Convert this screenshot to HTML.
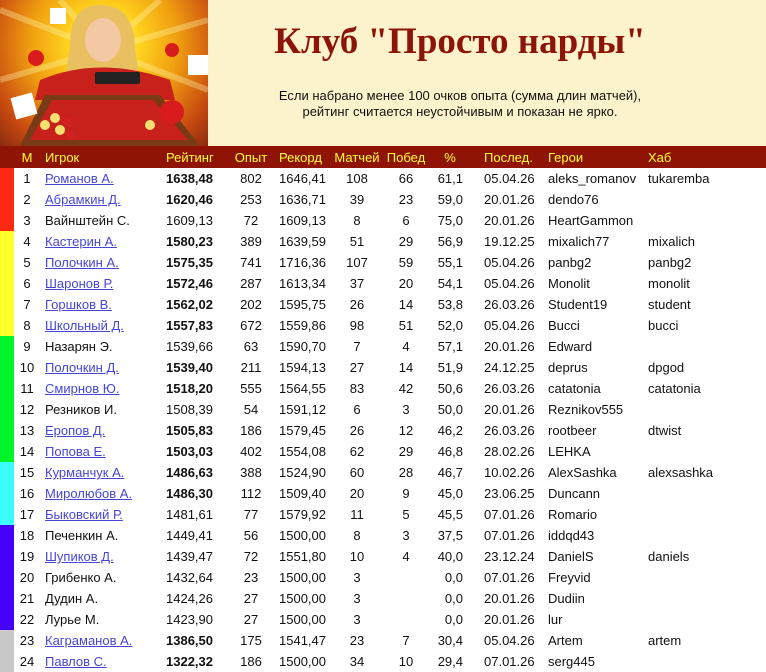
<!DOCTYPE html>
<html><head><meta charset="utf-8"><style>
*{margin:0;padding:0;box-sizing:border-box}
body{width:766px;height:671px;overflow:hidden;background:#fff;font-family:"Liberation Sans",Arial,sans-serif;font-size:13px;color:#111}
#top{position:absolute;left:0;top:0;width:766px;height:146px;background:#fcf2cc}
#img{position:absolute;left:0;top:0;width:208px;height:146px;overflow:hidden;
background:radial-gradient(circle at 50% 30%,#fff6a0 0,#ffd21e 25%,#f0a010 50%,#c84a10 80%,#8a2a10 100%)}
#title{position:absolute;left:230px;top:20px;width:460px;text-align:center;font-family:"Liberation Serif",serif;font-weight:bold;font-size:37px;color:#8c1408}
#sub{position:absolute;left:230px;top:88px;width:460px;text-align:center;font-size:13px;line-height:16px;color:#111}
table{position:absolute;left:0;top:146px;border-collapse:collapse;table-layout:fixed;width:766px}
td,th{height:21px;white-space:nowrap;padding:0;font-weight:normal;overflow:hidden}
tr.h th{background:#8f1405;color:#ffff3a;height:22px;text-align:left}
.s{width:14px}
.m{width:26px;text-align:center!important}
.n{width:120px;padding-left:5px}
.r{width:70px;padding-left:6px}
.o{width:42px;text-align:center!important}
.k{width:60px;padding-left:7px}
.c{width:50px;text-align:center!important}
.w{width:48px;text-align:center!important}
.p{width:40px;text-align:right!important;padding-right:7px}
.d{width:72px;padding-left:14px}
.g{width:100px;padding-left:6px}
.x{padding-left:6px}
a{color:#4646d6;text-decoration:underline}
b{font-weight:bold}
</style></head><body>
<div id="top">
<div id="img">
<svg width="208" height="146" viewBox="0 0 208 146">
<g opacity=".35" stroke="#fff8b0" stroke-width="6"><line x1="104" y1="50" x2="0" y2="10"/><line x1="104" y1="50" x2="0" y2="80"/><line x1="104" y1="50" x2="208" y2="20"/><line x1="104" y1="50" x2="208" y2="90"/><line x1="104" y1="50" x2="60" y2="0"/><line x1="104" y1="50" x2="160" y2="0"/></g>
<path d="M70 45 Q70 5 100 5 Q135 5 135 50 L140 80 L65 80Z" fill="#e8c060"/>
<ellipse cx="103" cy="40" rx="18" ry="22" fill="#f3c9a4"/>
<path d="M40 80 Q100 55 170 80 L175 100 L35 100Z" fill="#c8201a"/>
<rect x="95" y="72" width="45" height="12" fill="#222" rx="2"/>
<path d="M20 146 L45 95 L160 95 L200 146Z" fill="#7a3a16"/>
<path d="M30 140 L52 100 L153 100 L188 140Z" fill="#c8201a"/>
<g fill="#f4e070"><circle cx="45" cy="125" r="5"/><circle cx="55" cy="118" r="5"/><circle cx="60" cy="130" r="5"/><circle cx="150" cy="125" r="5"/></g>
<g fill="#d02020"><circle cx="68" cy="122" r="5"/><circle cx="70" cy="135" r="5"/></g>
<g fill="#fff"><rect x="13" y="95" width="22" height="22" transform="rotate(-15 24 106)"/><rect x="50" y="8" width="16" height="16"/><rect x="188" y="55" width="20" height="20"/></g>
<circle cx="172" cy="112" r="12" fill="#d81c1c"/><circle cx="36" cy="58" r="8" fill="#d81c1c"/><circle cx="172" cy="50" r="7" fill="#d81c1c"/>
</svg>
</div>
<div id="title">Клуб "Просто нарды"</div>
<div id="sub">Если набрано менее 100 очков опыта (сумма длин матчей),<br>рейтинг считается неустойчивым и показан не ярко.</div>
</div>
<table>
<tr class="h"><th class="s"></th><th class="m">М</th><th class="n">Игрок</th><th class="r">Рейтинг</th><th class="o">Опыт</th><th class="k">Рекорд</th><th class="c">Матчей</th><th class="w">Побед</th><th class="p" style="text-align:center!important;padding-right:0">%</th><th class="d">Послед.</th><th class="g">Герои</th><th class="x">Хаб</th></tr>
<tr><td style="background:#ff2a12"></td><td class="m">1</td><td class="n"><a>Романов А.</a></td><td class="r"><b>1638,48</b></td><td class="o">802</td><td class="k">1646,41</td><td class="c">108</td><td class="w">66</td><td class="p">61,1</td><td class="d">05.04.26</td><td class="g">aleks_romanov</td><td class="x">tukaremba</td></tr>
<tr><td style="background:#ff2a12"></td><td class="m">2</td><td class="n"><a>Абрамкин Д.</a></td><td class="r"><b>1620,46</b></td><td class="o">253</td><td class="k">1636,71</td><td class="c">39</td><td class="w">23</td><td class="p">59,0</td><td class="d">20.01.26</td><td class="g">dendo76</td><td class="x"></td></tr>
<tr><td style="background:#ff2a12"></td><td class="m">3</td><td class="n">Вайнштейн С.</td><td class="r">1609,13</td><td class="o">72</td><td class="k">1609,13</td><td class="c">8</td><td class="w">6</td><td class="p">75,0</td><td class="d">20.01.26</td><td class="g">HeartGammon</td><td class="x"></td></tr>
<tr><td style="background:#ffff2a"></td><td class="m">4</td><td class="n"><a>Кастерин А.</a></td><td class="r"><b>1580,23</b></td><td class="o">389</td><td class="k">1639,59</td><td class="c">51</td><td class="w">29</td><td class="p">56,9</td><td class="d">19.12.25</td><td class="g">mixalich77</td><td class="x">mixalich</td></tr>
<tr><td style="background:#ffff2a"></td><td class="m">5</td><td class="n"><a>Полочкин А.</a></td><td class="r"><b>1575,35</b></td><td class="o">741</td><td class="k">1716,36</td><td class="c">107</td><td class="w">59</td><td class="p">55,1</td><td class="d">05.04.26</td><td class="g">panbg2</td><td class="x">panbg2</td></tr>
<tr><td style="background:#ffff2a"></td><td class="m">6</td><td class="n"><a>Шаронов Р.</a></td><td class="r"><b>1572,46</b></td><td class="o">287</td><td class="k">1613,34</td><td class="c">37</td><td class="w">20</td><td class="p">54,1</td><td class="d">05.04.26</td><td class="g">Monolit</td><td class="x">monolit</td></tr>
<tr><td style="background:#ffff2a"></td><td class="m">7</td><td class="n"><a>Горшков В.</a></td><td class="r"><b>1562,02</b></td><td class="o">202</td><td class="k">1595,75</td><td class="c">26</td><td class="w">14</td><td class="p">53,8</td><td class="d">26.03.26</td><td class="g">Student19</td><td class="x">student</td></tr>
<tr><td style="background:#ffff2a"></td><td class="m">8</td><td class="n"><a>Школьный Д.</a></td><td class="r"><b>1557,83</b></td><td class="o">672</td><td class="k">1559,86</td><td class="c">98</td><td class="w">51</td><td class="p">52,0</td><td class="d">05.04.26</td><td class="g">Bucci</td><td class="x">bucci</td></tr>
<tr><td style="background:#00f428"></td><td class="m">9</td><td class="n">Назарян Э.</td><td class="r">1539,66</td><td class="o">63</td><td class="k">1590,70</td><td class="c">7</td><td class="w">4</td><td class="p">57,1</td><td class="d">20.01.26</td><td class="g">Edward</td><td class="x"></td></tr>
<tr><td style="background:#00f428"></td><td class="m">10</td><td class="n"><a>Полочкин Д.</a></td><td class="r"><b>1539,40</b></td><td class="o">211</td><td class="k">1594,13</td><td class="c">27</td><td class="w">14</td><td class="p">51,9</td><td class="d">24.12.25</td><td class="g">deprus</td><td class="x">dpgod</td></tr>
<tr><td style="background:#00f428"></td><td class="m">11</td><td class="n"><a>Смирнов Ю.</a></td><td class="r"><b>1518,20</b></td><td class="o">555</td><td class="k">1564,55</td><td class="c">83</td><td class="w">42</td><td class="p">50,6</td><td class="d">26.03.26</td><td class="g">catatonia</td><td class="x">catatonia</td></tr>
<tr><td style="background:#00f428"></td><td class="m">12</td><td class="n">Резников И.</td><td class="r">1508,39</td><td class="o">54</td><td class="k">1591,12</td><td class="c">6</td><td class="w">3</td><td class="p">50,0</td><td class="d">20.01.26</td><td class="g">Reznikov555</td><td class="x"></td></tr>
<tr><td style="background:#00f428"></td><td class="m">13</td><td class="n"><a>Еропов Д.</a></td><td class="r"><b>1505,83</b></td><td class="o">186</td><td class="k">1579,45</td><td class="c">26</td><td class="w">12</td><td class="p">46,2</td><td class="d">26.03.26</td><td class="g">rootbeer</td><td class="x">dtwist</td></tr>
<tr><td style="background:#00f428"></td><td class="m">14</td><td class="n"><a>Попова Е.</a></td><td class="r"><b>1503,03</b></td><td class="o">402</td><td class="k">1554,08</td><td class="c">62</td><td class="w">29</td><td class="p">46,8</td><td class="d">28.02.26</td><td class="g">LEHKA</td><td class="x"></td></tr>
<tr><td style="background:#3cfcfc"></td><td class="m">15</td><td class="n"><a>Курманчук А.</a></td><td class="r"><b>1486,63</b></td><td class="o">388</td><td class="k">1524,90</td><td class="c">60</td><td class="w">28</td><td class="p">46,7</td><td class="d">10.02.26</td><td class="g">AlexSashka</td><td class="x">alexsashka</td></tr>
<tr><td style="background:#3cfcfc"></td><td class="m">16</td><td class="n"><a>Миролюбов А.</a></td><td class="r"><b>1486,30</b></td><td class="o">112</td><td class="k">1509,40</td><td class="c">20</td><td class="w">9</td><td class="p">45,0</td><td class="d">23.06.25</td><td class="g">Duncann</td><td class="x"></td></tr>
<tr><td style="background:#3cfcfc"></td><td class="m">17</td><td class="n"><a>Быковский Р.</a></td><td class="r">1481,61</td><td class="o">77</td><td class="k">1579,92</td><td class="c">11</td><td class="w">5</td><td class="p">45,5</td><td class="d">07.01.26</td><td class="g">Romario</td><td class="x"></td></tr>
<tr><td style="background:#4400f8"></td><td class="m">18</td><td class="n">Печенкин А.</td><td class="r">1449,41</td><td class="o">56</td><td class="k">1500,00</td><td class="c">8</td><td class="w">3</td><td class="p">37,5</td><td class="d">07.01.26</td><td class="g">iddqd43</td><td class="x"></td></tr>
<tr><td style="background:#4400f8"></td><td class="m">19</td><td class="n"><a>Шупиков Д.</a></td><td class="r">1439,47</td><td class="o">72</td><td class="k">1551,80</td><td class="c">10</td><td class="w">4</td><td class="p">40,0</td><td class="d">23.12.24</td><td class="g">DanielS</td><td class="x">daniels</td></tr>
<tr><td style="background:#4400f8"></td><td class="m">20</td><td class="n">Грибенко А.</td><td class="r">1432,64</td><td class="o">23</td><td class="k">1500,00</td><td class="c">3</td><td class="w"></td><td class="p">0,0</td><td class="d">07.01.26</td><td class="g">Freyvid</td><td class="x"></td></tr>
<tr><td style="background:#4400f8"></td><td class="m">21</td><td class="n">Дудин А.</td><td class="r">1424,26</td><td class="o">27</td><td class="k">1500,00</td><td class="c">3</td><td class="w"></td><td class="p">0,0</td><td class="d">20.01.26</td><td class="g">Dudiin</td><td class="x"></td></tr>
<tr><td style="background:#4400f8"></td><td class="m">22</td><td class="n">Лурье М.</td><td class="r">1423,90</td><td class="o">27</td><td class="k">1500,00</td><td class="c">3</td><td class="w"></td><td class="p">0,0</td><td class="d">20.01.26</td><td class="g">lur</td><td class="x"></td></tr>
<tr><td style="background:#c8c8c8"></td><td class="m">23</td><td class="n"><a>Каграманов А.</a></td><td class="r"><b>1386,50</b></td><td class="o">175</td><td class="k">1541,47</td><td class="c">23</td><td class="w">7</td><td class="p">30,4</td><td class="d">05.04.26</td><td class="g">Artem</td><td class="x">artem</td></tr>
<tr><td style="background:#c8c8c8"></td><td class="m">24</td><td class="n"><a>Павлов С.</a></td><td class="r"><b>1322,32</b></td><td class="o">186</td><td class="k">1500,00</td><td class="c">34</td><td class="w">10</td><td class="p">29,4</td><td class="d">07.01.26</td><td class="g">serg445</td><td class="x"></td></tr>
</table>
</body></html>
